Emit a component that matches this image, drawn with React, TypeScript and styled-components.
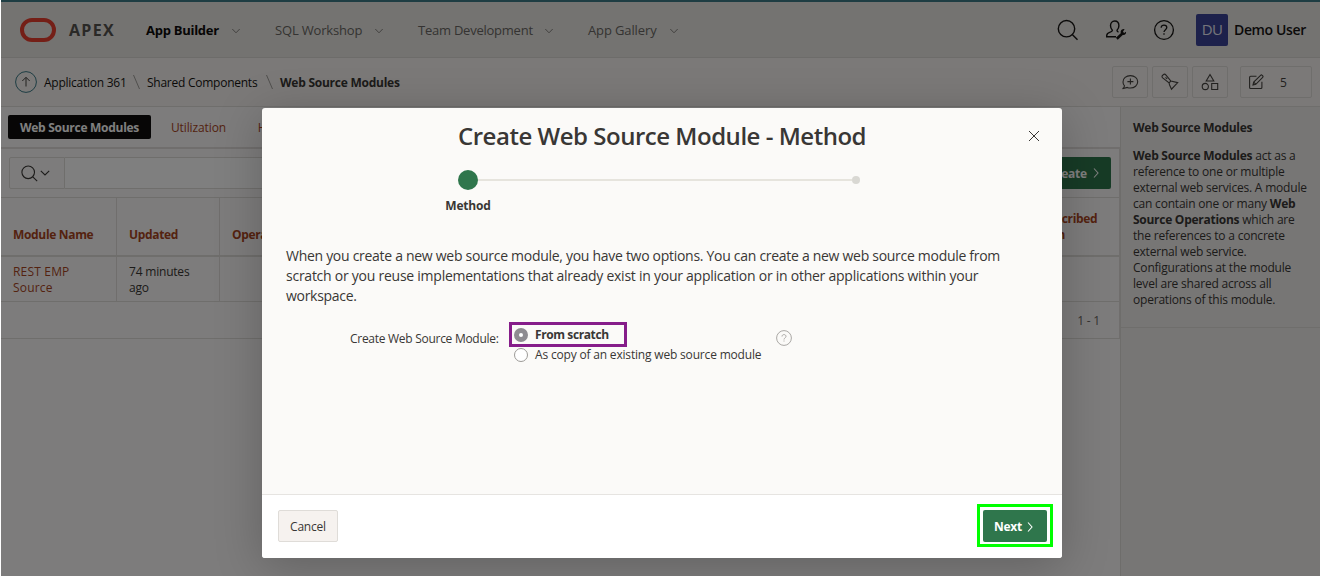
import React from "react";
import styled, { createGlobalStyle } from "styled-components";

const Global = createGlobalStyle`
  * { box-sizing: border-box; }
  body { margin: 0; }
  p, h1, h2 { margin: 0; }
  button { font: inherit; color: inherit; letter-spacing: inherit; padding: 0; }
`;

const Page = styled.div`
  position: relative;
  display: flex;
  flex-direction: column;
  width: 1320px;
  height: 576px;
  overflow: hidden;
  background: #f9f6f3;
  color: #393735;
  border-left: 1px solid #fff;
  font: 12px/16px "Open Sans", "Noto Sans", sans-serif;
  letter-spacing: -0.2px;
`;

const Text = styled.span<{ $track?: number }>`
  letter-spacing: ${(p) => p.$track ?? -0.2}px;
  white-space: nowrap;
`;

const Header = styled.header`
  display: flex;
  align-items: center;
  flex: none;
  height: 58px;
  padding: 0 14px 0 19px;
  background: #e9e6e3;
  border-top: 2px solid #3c7a87;
  border-bottom: 1px solid #dbd8d5;
`;

const Logo = styled.div`
  width: 36px;
  height: 24px;
  border: 4px solid #e83f2f;
  border-radius: 12px;
`;

const Brand = styled.div`
  width: 77px;
  margin-left: 13px;
  font-size: 16px;
  font-weight: 700;
  letter-spacing: 1.3px;
  color: #55524f;
`;

const Nav = styled.nav`
  display: flex;
  flex: 1;
`;

const NavItem = styled.div<{ $w: number; $active?: boolean }>`
  display: flex;
  align-items: center;
  justify-content: space-between;
  width: ${(p) => p.$w}px;
  margin-right: 35px;
  font-size: 13px;
  font-weight: ${(p) => (p.$active ? 700 : 400)};
  color: ${(p) => (p.$active ? "#0c0b0a" : "#6a6764")};
  svg { margin-top: 2px; color: #85827f; }
`;

const HeaderTools = styled.div`
  display: flex;
  align-items: center;
  gap: 24px;
  margin-right: 20px;
  color: #161513;
`;

const Avatar = styled.div`
  display: grid;
  place-items: center;
  width: 32px;
  height: 32px;
  padding-bottom: 1px;
  border-radius: 2px;
  background: #3a4396;
  color: #e8e8f4;
  font-size: 15px;
  letter-spacing: -0.6px;
  font-weight: 500;
`;

const UserName = styled.div`
  width: 72px;
  margin-left: 6px;
  font-size: 14px;
  font-weight: 600;
  letter-spacing: -0.36px;
  color: #161513;
  white-space: nowrap;
`;

const CrumbBar = styled.div`
  display: flex;
  align-items: center;
  gap: 7px;
  flex: none;
  height: 49px;
  padding: 0 8px 0 14px;
  background: #f6f3f0;
  border-bottom: 1px solid #dfdcd9;
  color: #161513;
`;

const Crumb = styled.span<{ $w: number; $current?: boolean }>`
  width: ${(p) => p.$w}px;
  padding-top: 2px;
  letter-spacing: -0.25px;
  white-space: nowrap;
  font-weight: ${(p) => (p.$current ? 700 : 400)};
  color: ${(p) => (p.$current ? "#393735" : "#161513")};
`;

const Tools = styled.div`
  display: flex;
  gap: 4px;
  margin-left: auto;
  color: #45423f;
`;

const ToolButton = styled.button<{ $wide?: boolean }>`
  display: flex;
  align-items: center;
  justify-content: ${(p) => (p.$wide ? "flex-start" : "center")};
  gap: 16px;
  width: ${(p) => (p.$wide ? 72 : 36)}px;
  height: 32px;
  margin-left: ${(p) => (p.$wide ? 8 : 0)}px;
  padding-left: ${(p) => (p.$wide ? 7 : 0)}px;
  border: 1px solid #dfdcd9;
  border-radius: 2px;
  background: transparent;
`;

const Count = styled.span`
  padding-top: 1px;
`;

const Body = styled.div`
  display: flex;
  flex: 1;
`;

const Main = styled.main`
  flex: 1;
  min-width: 0;
  background: #fbf9f8;
`;

const Tabs = styled.div`
  display: flex;
  align-items: center;
  height: 42px;
  border-bottom: 2px solid #e0ddda;
  padding-left: 7px;
  color: #a8451e;
`;

const Tab = styled.div<{ $w: number; $active?: boolean }>`
  display: flex;
  justify-content: center;
  align-items: center;
  width: ${(p) => p.$w}px;
  height: 24px;
  padding-top: 2px;
  border-radius: 2px;
  background: ${(p) => (p.$active ? "#0e0d0c" : "transparent")};
  color: ${(p) => (p.$active ? "#fff" : "inherit")};
  font-weight: ${(p) => (p.$active ? 700 : 400)};
`;

const SearchRow = styled.div`
  display: flex;
  align-items: center;
  height: 48px;
  padding: 0 8px;
  border-right: 1px solid #e0ddda;
`;

const SearchMenu = styled.div`
  display: flex;
  align-items: center;
  gap: 2px;
  width: 56px;
  height: 32px;
  padding-left: 11px;
  border: 1px solid #dfdcd9;
  border-radius: 2px 0 0 2px;
`;

const SearchInput = styled.div`
  width: 600px;
  height: 32px;
  background: #fff;
  border: 1px solid #dfdcd9;
  border-left: 0;
`;

const GreenButton = styled.button`
  display: flex;
  align-items: center;
  justify-content: center;
  gap: 4px;
  width: 64px;
  height: 32px;
  border: 0;
  border-radius: 2px;
  background: #2f764c;
  color: #fff;
  font-weight: 700;
`;

const NextButton = styled(GreenButton)`
  padding: 1px 2px 0 0;
`;

const CreateButton = styled(GreenButton)`
  justify-content: flex-end;
  gap: 5px;
  width: 80px;
  margin-left: auto;
  padding: 2px 11px 0 0;
  svg { margin-top: -2px; }
`;

const GridRow = styled.div<{ $head?: boolean }>`
  display: grid;
  grid-template-columns: 116px 103px 797px 1fr;
  height: ${(p) => (p.$head ? 60 : 45)}px;
  border-top: ${(p) => (p.$head ? "1px solid #dfdcd9" : "0")};
  border-right: 1px solid #e0ddda;
  border-bottom: ${(p) => (p.$head ? 2 : 1)}px solid #dfdcd9;
`;

const Cell = styled.div<{ $head?: boolean; $link?: boolean }>`
  display: flex;
  align-items: ${(p) => (p.$head ? "flex-end" : "flex-start")};
  padding: ${(p) => (p.$head ? "0 12px 12px" : "7px 12px 0")};
  border-right: 1px solid #e0ddda;
  font-weight: ${(p) => (p.$head ? 700 : 400)};
  color: ${(p) => (p.$head || p.$link ? "#a8451e" : "#393735")};
  letter-spacing: ${(p) => (p.$head ? -0.33 : p.$link ? 0.18 : -0.2)}px;
  &:last-child { border-right: 0; padding-left: 18px; }
`;

const GridFooter = styled.div`
  display: flex;
  align-items: center;
  justify-content: flex-end;
  height: 37px;
  padding: 2px 19px 0 0;
  border-right: 1px solid #e0ddda;
  border-bottom: 1px solid #dfdcd9;
  color: #6a6764;
`;

const Side = styled.aside`
  width: 200px;
  background: #efecea;
  border-left: 1px solid #dddad7;
`;

const SideHelp = styled.div`
  height: 221px;
  padding: 13px 0 0 12px;
  border-bottom: 1px solid #dfdcd9;
  b, h2 { letter-spacing: -0.27px; }
`;

const SideTitle = styled.h2`
  margin-bottom: 12px;
  font-size: 12px;
  line-height: 16px;
`;

const Line = styled.div<{ $track?: number }>`
  letter-spacing: ${(p) => p.$track ?? -0.2}px;
  white-space: nowrap;
`;

const Overlay = styled.div`
  position: absolute;
  inset: 0 0 0 -1px;
  padding: 108px 0 0 262px;
  background: rgba(0, 0, 0, 0.5);
`;

const Dialog = styled.section`
  display: flex;
  flex-direction: column;
  width: 800px;
  height: 450px;
  border-radius: 3px;
  overflow: hidden;
  background: #fbfaf8;
  box-shadow: 0 8px 48px rgba(0, 0, 0, 0.22);
`;

const DialogHead = styled.div`
  display: flex;
  align-items: center;
  height: 56px;
  padding: 0 22px 0 196px;
  color: #393735;
`;

const DialogTitle = styled.h1`
  flex: 1;
  font-size: 24px;
  line-height: 32px;
  font-weight: 600;
  letter-spacing: -0.48px;
  white-space: nowrap;
`;

const Steps = styled.div`
  display: flex;
  align-items: center;
  height: 32px;
  padding: 0 202px 0 196px;
`;

const Dot = styled.i<{ $on?: boolean }>`
  width: ${(p) => (p.$on ? 20 : 8)}px;
  height: ${(p) => (p.$on ? 20 : 8)}px;
  border-radius: 50%;
  background: ${(p) => (p.$on ? "#2f764c" : "#d9d8d3")};
`;

const Rail = styled.i`
  flex: 1;
  height: 2px;
  background: #e6e4dd;
`;

const StepLabel = styled.div`
  width: 100px;
  margin: 2px 0 0 156px;
  text-align: center;
  font-weight: 700;
`;

const Intro = styled.div`
  margin-top: 32px;
  padding-left: 24px;
  font-size: 14px;
  line-height: 20px;
`;

const Field = styled.div`
  display: flex;
  flex: 1;
  padding: 16px 0 0 88px;
`;

const FieldLabel = styled.div`
  width: 159px;
  padding-top: 9px;
  letter-spacing: -0.28px;
  white-space: nowrap;
`;

const Options = styled.div`
  width: 267px;
`;

const Option = styled.div<{ $selected?: boolean }>`
  display: flex;
  align-items: center;
  gap: 7px;
  width: ${(p) => (p.$selected ? "118px" : "auto")};
  height: ${(p) => (p.$selected ? 25 : 15)}px;
  padding-left: ${(p) => (p.$selected ? 2 : 5)}px;
  border: ${(p) => (p.$selected ? "3px solid #861d8a" : "0")};
  font-weight: ${(p) => (p.$selected ? 700 : 400)};
`;

const Radio = styled.i<{ $on?: boolean }>`
  flex: none;
  width: 14px;
  height: 14px;
  border-radius: 50%;
  border: ${(p) => (p.$on ? "5px solid #8e8c91" : "1px solid #9c9a97")};
  background: #fff;
`;

const HelpWrap = styled.div`
  padding-top: 8px;
  color: #aaa8a5;
`;

const DialogFoot = styled.footer`
  display: flex;
  align-items: flex-start;
  justify-content: space-between;
  height: 64px;
  padding: 9px 9px 0 16px;
  background: #fff;
  border-top: 1px solid #e6e4e1;
`;

const CancelButton = styled.button`
  width: 60px;
  height: 32px;
  margin-top: 6px;
  padding-top: 1px;
  border: 1px solid #dfdcd8;
  border-radius: 2px;
  background: #f6f2ef;
`;

const Highlight = styled.div`
  padding: 3px 3px 2px;
  border: 3px solid #00ff00;
`;

type SvgProps = { w: number; h?: number; sw?: number; children: React.ReactNode };

const Svg = ({ w, h = w, sw = 1, children }: SvgProps) => (
  <svg width={w} height={h} viewBox={`0 0 ${w} ${h}`} fill="none" stroke="currentColor" strokeWidth={sw}>
    {children}
  </svg>
);

const Chevron = () => (
  <Svg w={8} h={6}><path d="M.3 1 4 4.8 7.7 1" /></Svg>
);

const MenuChevron = () => (
  <Svg w={10} h={6} sw={1.1}><path d="M.8.8 5 5l4.200-4.200" /></Svg>
);

const SearchIcon = () => (
  <Svg w={24} sw={1.4}><circle cx="10.500" cy="10.700" r="8.200" /><path d="m16.500 16.700 5 5" /></Svg>
);

const AdminIcon = () => (
  <Svg w={24} sw={1.4}>
    <path d="M12 18.7H2.7v-1c0-2 1.2-2.8 3-3.4 2-.6 2.7-.9 2.7-2.1-1.2-1.1-1.9-2.7-1.9-4.4 0-2.8 1.6-4.8 4.2-4.800s4.200 2 4.200 4.800c0 1.700-.7 3.300-1.900 4.400 0 1 .4 1.500 1.500 1.900" />
    <path d="m12.800 20.700 5.600-5.200" strokeWidth="2.600" />
    <path d="M20.600 11.100c-1.900-.4-4 .9-4 3 0 1.700 1.300 2.900 2.900 2.900 1.700 0 2.900-1.500 2.500-3.300l-1.900 1.200-1.100-1.200z" fill="currentColor" stroke="none" />
  </Svg>
);

const HelpIcon = () => (
  <Svg w={24} sw={1.3}>
    <circle cx="12" cy="12" r="9.400" />
    <path d="M9.200 9.700c0-1.600 1.200-2.600 2.800-2.600s2.800 1 2.800 2.500c0 2-2.800 2.200-2.800 4.400M12 15.300v1.500" />
  </Svg>
);

const SmallHelpIcon = () => (
  <Svg w={16}>
    <circle cx="8" cy="8" r="7.400" />
    <path d="M6 6.500C6 5.300 6.900 4.600 8 4.600s2 .7 2 1.800c0 1.400-2 1.600-2 3.100M8 10.500v1" />
  </Svg>
);

const UpIcon = () => (
  <Svg w={22}>
    <circle cx="11" cy="11" r="10.400" stroke="#3c7a87" />
    <path d="M11 15.500V6.500M7.300 10 11 6.300 14.700 10" stroke="#45423f" />
  </Svg>
);

const Slash = () => (
  <Svg w={7} h={16}><path d="M.5 1l6 14" stroke="#a09d9a" /></Svg>
);

const CommentIcon = () => (
  <Svg w={18} sw={1.1}>
    <path d="M3.500 12.800C2.500 11.700 2 10.400 2 8.900 2 5.300 5.200 2.600 9.400 2.600s7.300 2.700 7.300 6.200-3.100 6.200-7.300 6.200c-1.100 0-2.200-.2-3.100-.6L1.500 15.800c1.200-.7 1.900-1.700 2-3z" />
    <path d="M9.400 5.600v6M6.400 8.600h6" />
  </Svg>
);

const TorchIcon = () => (
  <Svg w={18} sw={1.1}>
    <path d="M8.600 12 8 9.800 1.700 4.900c-.9-.8-.9-1.700-.2-2.400l.9-.9c.7-.7 1.600-.7 2.400.2L9.900 8l6.800 1.600-6.200 6.600z" />
    <path d="M8 9.800 9.900 8M4.500 4.300l1.700 1.500" />
  </Svg>
);

const ShapesIcon = () => (
  <Svg w={18} sw={1.1}>
    <path d="M9 1.500 12.800 8H5.200zM10.700 10.500h6v6h-6z" />
    <circle cx="4.300" cy="13.500" r="3.100" />
  </Svg>
);

const EditIcon = () => (
  <Svg w={16} sw={1.1}>
    <path d="M8.500 2.200H2.600c-.6 0-1 .4-1 1v10.300c0 .6.4 1 1 1h10.300c.6 0 1-.4 1-1V7.800" />
    <path d="m5 11 .7-2.900 6.900-6.800c.5-.5 1.200-.4 1.600 0l.5.500c.4.500.4 1.100 0 1.500l-6.900 7zM5.700 8.100 8 10.400" />
  </Svg>
);

const Search16 = () => (
  <Svg w={17} sw={1.1}><circle cx="7.200" cy="7.300" r="6.300" /><path d="m11.800 11.900 4.400 4.300" /></Svg>
);

const ArrowRight = () => (
  <Svg w={8} h={12} sw={1.1}><path d="M2 1.500 6 6l-4 4.500" /></Svg>
);

const NAV = [
  { label: "App Builder", w: 94, track: -0.27, active: true },
  { label: "SQL Workshop", w: 108, track: -0.17 },
  { label: "Team Development", w: 135, track: -0.24 },
  { label: "App Gallery", w: 90, track: -0.12 },
];

export default function App() {
  return (
    <>
      <Global />
      <Page>
        <Header>
          <Logo />
          <Brand>APEX</Brand>
          <Nav>
            {NAV.map((n) => (
              <NavItem key={n.label} $w={n.w} $active={n.active}>
                <Text $track={n.track}>{n.label}</Text>
                <Chevron />
              </NavItem>
            ))}
          </Nav>
          <HeaderTools>
            <SearchIcon />
            <AdminIcon />
            <HelpIcon />
          </HeaderTools>
          <Avatar>DU</Avatar>
          <UserName>Demo User</UserName>
        </Header>
        <CrumbBar>
          <UpIcon />
          <Crumb $w={82}>Application 361</Crumb>
          <Slash />
          <Crumb $w={112}>Shared Components</Crumb>
          <Slash />
          <Crumb $w={120} $current>Web Source Modules</Crumb>
          <Tools>
            <ToolButton><CommentIcon /></ToolButton>
            <ToolButton><TorchIcon /></ToolButton>
            <ToolButton><ShapesIcon /></ToolButton>
            <ToolButton $wide><EditIcon /><Count>5</Count></ToolButton>
          </Tools>
        </CrumbBar>
        <Body>
          <Main>
            <Tabs>
              <Tab $w={143} $active><Text $track={-0.28}>Web Source Modules</Text></Tab>
              <Tab $w={95}><Text $track={-0.1}>Utilization</Text></Tab>
              <Tab $w={62}><Text>History</Text></Tab>
            </Tabs>
            <SearchRow>
              <SearchMenu><Search16 /><MenuChevron /></SearchMenu>
              <SearchInput />
              <CreateButton>Create<ArrowRight /></CreateButton>
            </SearchRow>
            <GridRow $head>
              <Cell $head>Module Name</Cell>
              <Cell $head>Updated</Cell>
              <Cell $head>Operations</Cell>
              <Cell $head>Subscribed<br />From</Cell>
            </GridRow>
            <GridRow>
              <Cell $link>REST EMP Source</Cell>
              <Cell>74 minutes ago</Cell>
              <Cell />
              <Cell />
            </GridRow>
            <GridFooter>1 - 1</GridFooter>
          </Main>
          <Side>
            <SideHelp>
              <SideTitle>Web Source Modules</SideTitle>
              <Line><b>Web Source Modules</b> act as a</Line>
              <Line>reference to one or multiple</Line>
              <Line>external web services. A module</Line>
              <Line>can contain one or many <b>Web</b></Line>
              <Line><b>Source Operations</b> which are</Line>
              <Line>the references to a concrete</Line>
              <Line>external web service.</Line>
              <Line>Configurations at the module</Line>
              <Line>level are shared across all</Line>
              <Line>operations of this module.</Line>
            </SideHelp>
          </Side>
        </Body>
        <Overlay>
          <Dialog>
            <DialogHead>
              <DialogTitle>Create Web Source Module - Method</DialogTitle>
              <Svg w={12}><path d="m1 1 10 10M11 1 1 11" /></Svg>
            </DialogHead>
            <Steps><Dot $on /><Rail /><Dot /></Steps>
            <StepLabel>Method</StepLabel>
            <Intro>
              <Line $track={-0.29}>When you create a new web source module, you have two options. You can create a new web source module from</Line>
              <Line $track={-0.25}>scratch or you reuse implementations that already exist in your application or in other applications within your</Line>
              <Line $track={-0.3}>workspace.</Line>
            </Intro>
            <Field>
              <FieldLabel>Create Web Source Module:</FieldLabel>
              <Options>
                <Option $selected><Radio $on /><Text $track={-0.4}>From scratch</Text></Option>
                <Option><Radio /><Text $track={-0.18}>As copy of an existing web source module</Text></Option>
              </Options>
              <HelpWrap><SmallHelpIcon /></HelpWrap>
            </Field>
            <DialogFoot>
              <CancelButton>Cancel</CancelButton>
              <Highlight><NextButton>Next<ArrowRight /></NextButton></Highlight>
            </DialogFoot>
          </Dialog>
        </Overlay>
      </Page>
    </>
  );
}
